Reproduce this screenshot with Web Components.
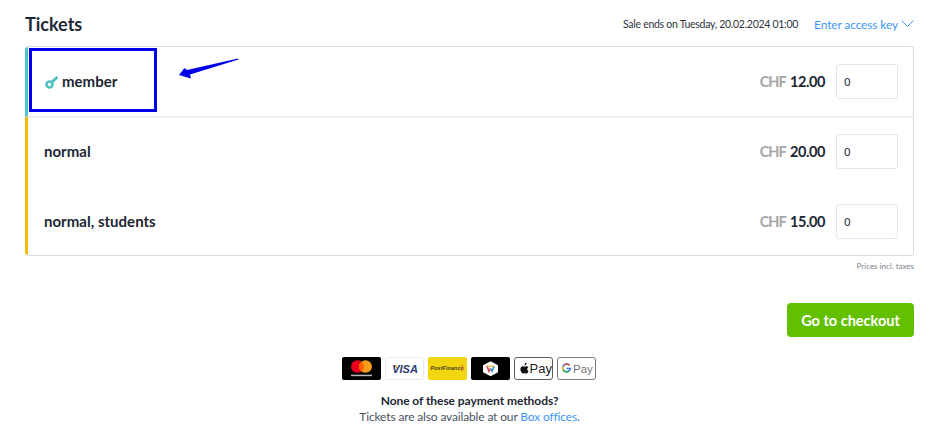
<!DOCTYPE html>
<html><head><meta charset="utf-8"><title>Tickets</title>
<style>
html,body{margin:0;padding:0;background:#fff}
body{font-family:"Lato","Noto Sans",sans-serif;color:#1d2733;width:944px;height:427px;overflow:hidden}
</style></head>
<body>
<ticket-page>
  <ticket-row accent="#4fc1c4" divider price="12.00" keyed annotated>member</ticket-row>
  <ticket-row accent="#f0bb0c" price="20.00">normal</ticket-row>
  <ticket-row accent="#f0bb0c" price="15.00">normal, students</ticket-row>
</ticket-page>
<script>
class TicketRow extends HTMLElement{
  constructor(){super();
    const s=this.attachShadow({mode:'open'});
    const key=this.hasAttribute('keyed')?`<svg class="key" width="13" height="13" viewBox="0 0 13 13"><circle cx="4.500" cy="8.500" r="3" fill="none" stroke="#4fc1c4" stroke-width="2.600"/><path d="M6.500 6.500 12.500 1" stroke="#4fc1c4" stroke-width="3"/></svg>`:'';
    const note=this.hasAttribute('annotated')?`<div class="box"></div><svg class="arrow" width="62" height="24" viewBox="0 0 62 24"><path d="M0 18 5.500 11 8 13 59 1.500 59.500 2.500 11 17.500 12 21.500Z" fill="#0000e6"/></svg>`:'';
    s.innerHTML=`<style>
      :host{display:flex;align-items:center;height:69px;box-sizing:border-box;padding:0 15px 0 16px;position:relative;border-left:3px solid ${this.getAttribute('accent')};${this.hasAttribute('divider')?'height:70px;border-bottom:1px solid #e6eaf0;box-shadow:0 1px 0 #eef1f5;':''}}
      :host(:last-child){padding-top:2px}
      .name{flex:1;display:flex;align-items:center;gap:4px;font-size:15px;font-weight:700;letter-spacing:.02px;margin-bottom:2px}
      .key{display:block;margin-top:4px;margin-left:1px}
      .price{font-size:14.500px;font-weight:700;margin-right:11px;letter-spacing:-.42px;word-spacing:1px}
      .cur{color:#a3a5a8;letter-spacing:-.9px}
      .qty{width:62px;height:35px;box-sizing:border-box;border:1px solid #e4e6e9;border-radius:3px;display:flex;align-items:center;padding-left:7px;font-size:11.500px;font-family:"Noto Sans",sans-serif;color:#1d2733;background:#fff}
      .box{position:absolute;left:1px;top:1px;width:128px;height:64px;box-sizing:border-box;border:3px solid #0000ea;pointer-events:none}
      .arrow{position:absolute;left:151px;top:10px}
    </style>
    <div class="name">${key}<span><slot></slot></span></div>
    <div class="price"><span class="cur">CHF</span> ${this.getAttribute('price')}</div>
    <div class="qty">0</div>${note}`;
  }
}
class TicketPage extends HTMLElement{
  constructor(){super();
    this.attachShadow({mode:'open'}).innerHTML=`<style>
      :host{display:block;padding:0 30px 0 25px}
      header{display:flex;align-items:center;height:46px}
      h1{margin:0;font-size:18px;font-weight:700;flex:1;position:relative;top:1px}
      .ends{font-size:10.500px;letter-spacing:-.28px;margin-right:16px;color:#2c3440;margin-top:1px}
      .key{font-size:12px;letter-spacing:-.15px;color:#3d97f5;display:flex;align-items:center;gap:3px;margin-top:2px}
      .table{border:1px solid #d6dce6;border-left:0;border-radius:4px;overflow:hidden;height:210px;box-sizing:border-box}
      .taxes{text-align:right;font-size:8px;color:#7b838c;margin-top:5px;height:11px;line-height:11px}
      .act{display:flex;justify-content:flex-end;margin-top:31px}
      .go{background:#62c000;color:#fff;font-weight:700;font-size:14.500px;width:127px;height:34px;border-radius:4px;display:flex;align-items:center;justify-content:center}
      .pay{display:flex;justify-content:center;gap:4px;margin-top:20px;padding-right:2px}
      .pay>svg{display:block}
      .help{text-align:center;font-size:12px;letter-spacing:-.15px;line-height:16px;margin-top:13px;color:#4a5461}
      .help b{color:#1d2733;display:block;letter-spacing:-.06px}
      a{color:#3d97f5;text-decoration:none}
    </style>
    <header><h1>Tickets</h1><span class="ends">Sale ends on Tuesday, 20.02.2024 01:00</span>
      <span class="key">Enter access key <svg width="13" height="8" viewBox="0 0 13 8"><path d="M.5.5 6.500 6.500 12.500.5" fill="none" stroke="#3d97f5"/></svg></span></header>
    <div class="table"><slot></slot></div>
    <div class="taxes">Prices incl. taxes</div>
    <div class="act"><div class="go">Go to checkout</div></div>
    <div class="pay">
      <svg width="39" height="23" viewBox="0 0 39 24" preserveAspectRatio="none"><rect width="39" height="24" rx="2" fill="#000"/><circle cx="15.500" cy="10" r="6.500" fill="#eb001b"/><circle cx="23.500" cy="10" r="6.500" fill="#f79e1b"/><path d="M19.500 4.900a6.500 6.500 0 0 1 0 10.200a6.500 6.500 0 0 1 0-10.200Z" fill="#ff5f00"/><rect x="9" y="18.500" width="21" height="1.500" fill="#bbb"/></svg>
      <svg width="39" height="23" viewBox="0 0 39 24" preserveAspectRatio="none"><rect x=".5" y=".5" width="38" height="23" rx="2" fill="#fff" stroke="#eaecf1"/><path d="M8.500 8.500h3l1 4Z" fill="#e8a33d"/><text x="20" y="16.500" text-anchor="middle" font-family="Liberation Sans" font-size="11" font-weight="700" font-style="italic" fill="#2b3a72">VISA</text></svg>
      <svg width="39" height="23" viewBox="0 0 39 24" preserveAspectRatio="none"><rect width="39" height="24" rx="2" fill="#f2d60f"/><text x="2.500" y="14" font-family="Liberation Sans" font-size="5.600" font-weight="700" font-style="italic" fill="#4a4220">PostFinance</text><path d="M33.500 8l2.500 3.500L33.500 15" fill="none" stroke="#e8912a" stroke-width="1.500"/></svg>
      <svg width="39" height="23" viewBox="0 0 39 24" preserveAspectRatio="none"><rect width="39" height="24" rx="2" fill="#000"/><path d="M19.500 4.500 27 8.500v7.500l-7.500 4-7.500-4V8.500Z" fill="#fff"/><path d="M16 9.500l2 5.500 1.500-3" fill="none" stroke="#e5403a" stroke-width="1.600"/><path d="M19.500 12l1.500 3 2.200-5.500" fill="none" stroke="#2c9ad6" stroke-width="1.600"/><path d="M16 9.500h7" stroke="#f2b01e" stroke-width="1.200"/></svg>
      <svg width="39" height="23" viewBox="0 0 39 24" preserveAspectRatio="none"><rect x=".5" y=".5" width="38" height="23" rx="2.500" fill="#fff" stroke="#555"/><path d="M10.700 8.700c.7 0 1.300-.5 1.600-1.100.3-.6.300-1.300.2-1.600-.7.100-1.400.5-1.700 1-.3.500-.4 1.100-.1 1.700ZM13.300 12.500c0-1.200.9-1.700 1.100-1.900-.6-.9-1.500-1-1.900-1-.8-.1-1.500.4-1.900.4s-1-.4-1.700-.4c-.9 0-1.700.5-2.100 1.300-.9 1.600-.2 3.900.6 5.100.4.600.9 1.300 1.600 1.300.6 0 .9-.4 1.700-.4s1 .4 1.700.4 1.100-.6 1.500-1.200c.5-.7.700-1.400.7-1.400s-1.300-.5-1.300-1.700Z" fill="#111"/><text x="15.500" y="16.800" font-family="Liberation Sans" font-size="13" fill="#222">Pay</text></svg>
      <svg width="39" height="23" viewBox="0 0 39 24" preserveAspectRatio="none"><rect x=".5" y=".5" width="38" height="23" rx="2.500" fill="#fff" stroke="#777"/><path d="M12.500 8.500a4 4 0 1 0 1 3.500H9.500" fill="none" stroke="#4285f4" stroke-width="1.500"/><path d="M12.500 8.500a4 4 0 0 0-5.600.500" fill="none" stroke="#ea4335" stroke-width="1.500"/><path d="M6 10.200a4 4 0 0 0 0 3.400" fill="none" stroke="#fbbc05" stroke-width="1.500"/><path d="M6.200 13.800a4 4 0 0 0 6 1" fill="none" stroke="#34a853" stroke-width="1.500"/><text x="16" y="16.300" font-family="Liberation Sans" font-size="11.500" fill="#777">Pay</text></svg>
    </div>
    <div class="help"><b>None of these payment methods?</b>Tickets are also available at our <a>Box offices</a>.</div>`;
  }
}
customElements.define('ticket-row',TicketRow);
customElements.define('ticket-page',TicketPage);
</script>
</body></html>
